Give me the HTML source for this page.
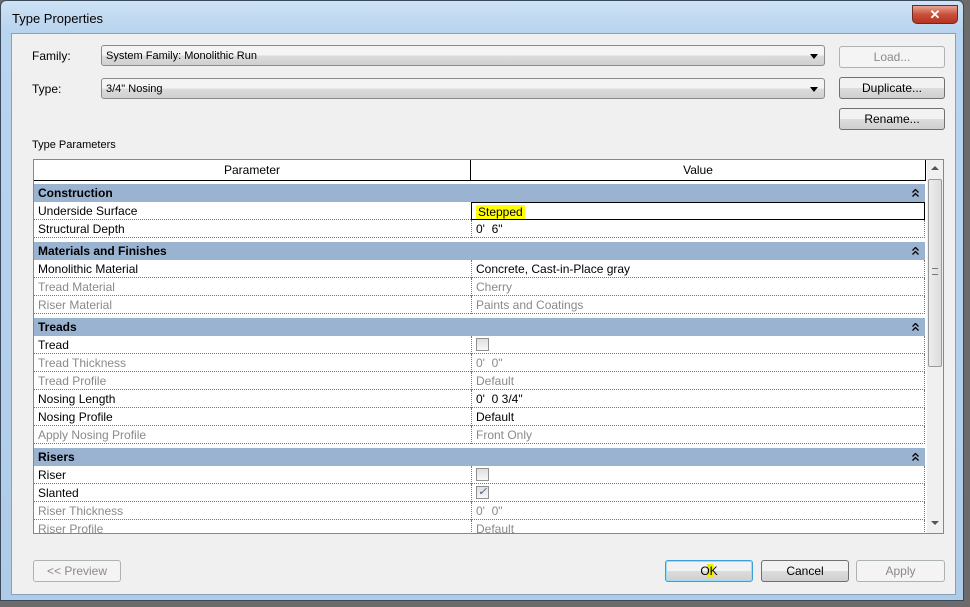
<!DOCTYPE html>
<html><head><style>
*{margin:0;padding:0;box-sizing:border-box}
body{width:970px;height:607px;background:#6b6b6b;font-family:"Liberation Sans",sans-serif;font-size:12px;color:#000;position:relative;overflow:hidden}
.win{position:absolute;left:0;top:0;width:964px;height:601px;background:linear-gradient(180deg,#cde2f5 0,#b9d4ee 30px,#aecbe8 100%);border:1px solid #3a4a5a;border-radius:6px 6px 0 0}
.title{position:absolute;left:11px;top:10px;font-size:13px}
.close{position:absolute;left:911px;top:4px;width:46px;height:19px;border:1px solid #6b2a22;border-radius:0 0 5px 5px;background:linear-gradient(#e8a493,#c7503a 50%,#b8321f);color:#fff;font-weight:bold;text-align:center;font-size:13px;line-height:17px}
.client{position:absolute;left:11px;top:33px;width:945px;height:562px;background:#f0f0f0;border:1px solid #8aa0b8}
.a{position:absolute}
.lbl{position:absolute;font-size:12px}
.combo{position:absolute;height:21px;border:1px solid #8b8b8b;border-radius:3px;background:linear-gradient(#f4f4f4 50%,#dcdcdc 50%,#d0d0d0);padding:0 4px;line-height:20px;font-size:11px}
.combo:after{content:"";position:absolute;right:6px;top:8px;border:4px solid transparent;border-top:5px solid #000;border-bottom:0}
.btn{position:absolute;height:22px;border:1px solid #707070;border-radius:3px;background:linear-gradient(#f2f2f2 50%,#dddddd 50%,#cfcfcf);text-align:center;line-height:20px;font-size:12px}
.dis{border-color:#adb2b5;background:#f4f4f4;color:#8a8a8a}
.grid{position:absolute;left:33px;top:159px;width:911px;height:375px;background:#fff;border:1px solid #828790;overflow:hidden}
.hdr{position:absolute;top:0;height:21px;border-right:1px solid #000;border-bottom:1px solid #000;text-align:center;line-height:20px;background:#fff}
.grp{position:absolute;left:0;width:891px;height:18px;background:#9ab3d1;font-weight:bold;line-height:18px;padding-left:4px}
.grp svg{position:absolute;right:6px;top:5px}
.row{position:absolute;left:0;width:891px;height:18px;border-bottom:1px dotted #777;line-height:18px}
.row span{position:absolute;left:4px}
.row b{position:absolute;left:437px;top:0;height:18px;border-left:1px dotted #777;padding-left:4px;font-weight:normal;width:454px;border-right:1px dotted #777}
.g{color:#8a8a8a}
.cb{display:inline-block;width:13px;height:13px;border:1px solid #8e8f8f;background:linear-gradient(#e0e0e0,#f8f8f8);margin-top:2px;vertical-align:top;font-size:11px;line-height:11px;text-align:center;color:#3c4f8c}
.sb{position:absolute;left:893px;top:0;width:16px;height:373px;background:#f0f0f0}
</style></head><body>
<div class="win">
<div class="title">Type Properties</div>
<div class="close">✕</div>
</div>
<div class="client"></div>
<div class="lbl" style="left:32px;top:49px">Family:</div>
<div class="lbl" style="left:32px;top:82px">Type:</div>
<div class="combo" style="left:101px;top:45px;width:724px">System Family: Monolithic Run</div>
<div class="combo" style="left:101px;top:78px;width:724px">3/4" Nosing</div>
<div class="btn dis" style="left:839px;top:46px;width:106px">Load...</div>
<div class="btn" style="left:839px;top:77px;width:106px">Duplicate...</div>
<div class="btn" style="left:839px;top:108px;width:106px">Rename...</div>
<div class="lbl" style="left:32px;top:139px;font-size:11px">Type Parameters</div>
<div class="grid">
<div class="hdr" style="left:0;width:437px">Parameter</div>
<div class="hdr" style="left:437px;width:455px">Value</div>
<div class="grp" style="top:24px">Construction<svg width="7" height="8"><path d="M0.5 3.5L3.5 0.5L6.5 3.5M0.5 7.5L3.5 4.5L6.5 7.5" fill="none" stroke="#000" stroke-width="1.3"/></svg></div>
<div class="row" style="top:42px"><span>Underside Surface</span><b style="border:1px solid #000;background:#fff"><i style="font-style:normal;background:#ffff00;padding:0 2px">Stepped</i></b></div>
<div class="row" style="top:60px"><span>Structural Depth</span><b>0'&nbsp; 6"</b></div>
<div class="grp" style="top:82px">Materials and Finishes<svg width="7" height="8"><path d="M0.5 3.5L3.5 0.5L6.5 3.5M0.5 7.5L3.5 4.5L6.5 7.5" fill="none" stroke="#000" stroke-width="1.3"/></svg></div>
<div class="row" style="top:100px"><span>Monolithic Material</span><b>Concrete, Cast-in-Place gray</b></div>
<div class="row g" style="top:118px"><span>Tread Material</span><b>Cherry</b></div>
<div class="row g" style="top:136px"><span>Riser Material</span><b>Paints and Coatings</b></div>
<div class="grp" style="top:158px">Treads<svg width="7" height="8"><path d="M0.5 3.5L3.5 0.5L6.5 3.5M0.5 7.5L3.5 4.5L6.5 7.5" fill="none" stroke="#000" stroke-width="1.3"/></svg></div>
<div class="row" style="top:176px"><span>Tread</span><b><i class="cb"></i></b></div>
<div class="row g" style="top:194px"><span>Tread Thickness</span><b>0'&nbsp; 0"</b></div>
<div class="row g" style="top:212px"><span>Tread Profile</span><b>Default</b></div>
<div class="row" style="top:230px"><span>Nosing Length</span><b>0'&nbsp; 0 3/4"</b></div>
<div class="row" style="top:248px"><span>Nosing Profile</span><b>Default</b></div>
<div class="row g" style="top:266px"><span>Apply Nosing Profile</span><b>Front Only</b></div>
<div class="grp" style="top:288px">Risers<svg width="7" height="8"><path d="M0.5 3.5L3.5 0.5L6.5 3.5M0.5 7.5L3.5 4.5L6.5 7.5" fill="none" stroke="#000" stroke-width="1.3"/></svg></div>
<div class="row" style="top:306px"><span>Riser</span><b><i class="cb"></i></b></div>
<div class="row" style="top:324px"><span>Slanted</span><b><i class="cb">✓</i></b></div>
<div class="row g" style="top:342px"><span>Riser Thickness</span><b>0'&nbsp; 0"</b></div>
<div class="row g" style="top:360px"><span>Riser Profile</span><b>Default</b></div>
<div class="sb">
<div class="a" style="left:4px;top:6px;border:4px solid transparent;border-bottom:4px solid #555;border-top:0"></div>
<div class="a" style="left:1px;top:19px;width:14px;height:188px;border:1px solid #9a9a9a;border-radius:2px;background:linear-gradient(90deg,#eee,#dcdcdc)"><div class="a" style="left:3px;top:88px;width:6px;height:7px;border-top:1px solid #777;border-bottom:1px solid #777"></div></div>
<div class="a" style="left:4px;top:361px;border:4px solid transparent;border-top:4px solid #555;border-bottom:0"></div>
</div>
</div>
<div class="btn dis" style="left:33px;top:560px;width:88px">&lt;&lt; Preview</div>
<div class="btn" style="left:665px;top:560px;width:88px;border-color:#3c9fd6;box-shadow:inset 0 0 0 1px #9ddcf7"><span style="background:linear-gradient(90deg,transparent 40%,#eeee00 40%,#eeee00 75%,transparent 75%)">OK</span></div>
<div class="btn" style="left:761px;top:560px;width:88px">Cancel</div>
<div class="btn dis" style="left:856px;top:560px;width:89px">Apply</div>
</body></html>
